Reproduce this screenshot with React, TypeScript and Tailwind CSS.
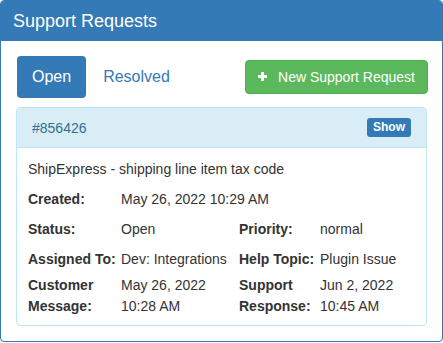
export default function App() {
  return (
    <div className="w-[443px] h-[343px] bg-white font-['Liberation_Sans',Arial,sans-serif] text-[#333]">
      <div className="h-[342px] border border-[#337ab7] rounded-[4px] overflow-hidden flex flex-col">
        {/* Panel heading */}
        <div className="h-[40px] bg-[#337ab7] px-[12px] flex items-center">
          <h3 className="text-[18px] leading-[20px] text-white">Support Requests</h3>
        </div>

        <div className="px-[15px] pt-[15px]">
          {/* Tabs + action */}
          <div className="ml-[1px] -mr-[1px] flex items-center">
            <button className="h-[42px] px-[15px] rounded-[4px] bg-[#337ab7] text-white text-[16px] leading-[22px]">
              Open
            </button>
            <button className="ml-[2px] h-[42px] px-[15px] rounded-[4px] text-[#337ab7] text-[16px] leading-[22px]">
              Resolved
            </button>
            <button className="ml-auto h-[34px] px-[12px] rounded-[4px] border border-[#4cae4c] bg-[#5cb85c] text-white text-[14px] leading-[20px] flex items-center">
              <svg width="9" height="9" viewBox="0 0 9 9" className="mr-[11px] mt-[-1px]">
                <path d="M3 0h3v3h3v3H6v3H3V6H0V3h3z" fill="#fff" />
              </svg>
              New Support Request
            </button>
          </div>

          {/* Request card */}
          <div className="mt-[9px] border border-[#bce8f1] rounded-[4px] overflow-hidden">
            <div className="h-[40px] bg-[#d9edf7] border-b border-[#bce8f1] px-[15px] flex items-center justify-between">
              <span className="text-[14px] leading-[20px] text-[#31708f]">#856426</span>
              <button className="h-[19px] px-[6px] rounded-[3px] bg-[#337ab7] text-white text-[12px] font-bold leading-[19px]">
                Show
              </button>
            </div>
            <div className="pl-[11px] pr-[11px] pt-[11px] pb-[8px] text-[14px] leading-[20px]">
              <div>ShipExpress - shipping line item tax code</div>
              <div className="grid grid-cols-[93px_118px_81px_1fr] mt-[10px]">
                <div className="font-bold">Created:</div>
                <div className="col-span-3">May 26, 2022 10:29 AM</div>

                <div className="font-bold mt-[10px]">Status:</div>
                <div className="mt-[10px]">Open</div>
                <div className="font-bold mt-[10px]">Priority:</div>
                <div className="mt-[10px]">normal</div>

                <div className="font-bold mt-[10px]">Assigned To:</div>
                <div className="mt-[10px]">Dev: Integrations</div>
                <div className="font-bold mt-[10px]">Help Topic:</div>
                <div className="mt-[10px]">Plugin Issue</div>

                <div className="font-bold mt-[6px] leading-[21px]">Customer<br />Message:</div>
                <div className="mt-[6px] leading-[21px]">May 26, 2022<br />10:28 AM</div>
                <div className="font-bold mt-[6px] leading-[21px]">Support<br />Response:</div>
                <div className="mt-[6px] leading-[21px]">Jun 2, 2022<br />10:45 AM</div>
              </div>
            </div>
          </div>
        </div>
      </div>
    </div>
  );
}
